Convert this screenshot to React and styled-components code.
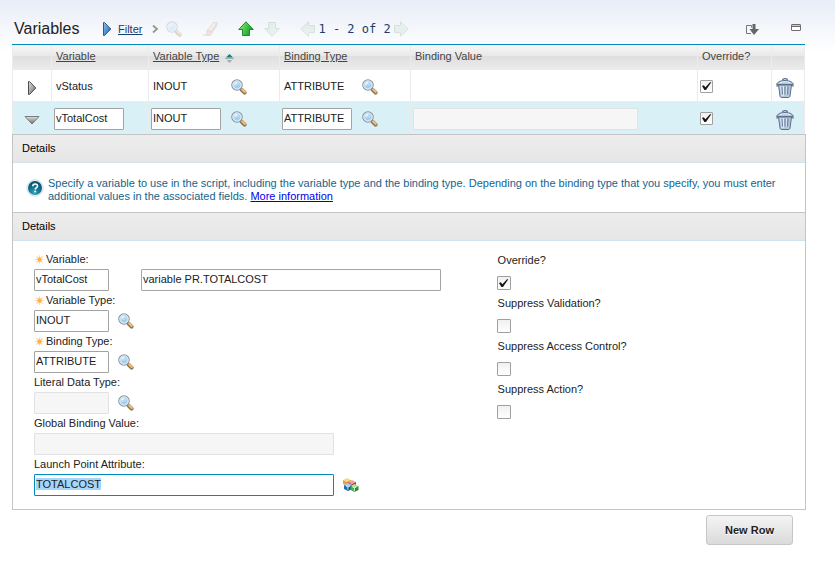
import React, { useEffect, useRef } from "react";
import styled, { createGlobalStyle } from "styled-components";

const ROWS = [
  { id: 1, name: "vStatus", type: "INOUT", binding: "ATTRIBUTE", open: false },
  { id: 2, name: "vTotalCost", type: "INOUT", binding: "ATTRIBUTE", open: true },
];

function SearchIcon() {
  return (
    <svg width="16" height="16" viewBox="0 0 16 16" aria-hidden="true">
      <path d="M9.4 9.4l2 2" stroke="#777d87" strokeWidth="2" />
      <path d="M10.8 10.8l2.800 2.800" stroke="#85745f" strokeWidth="4" strokeLinecap="round" />
      <path d="M11.200 10.400l2.600 2.600" stroke="#f5bd68" strokeWidth="2.200" strokeLinecap="round" />
      <circle cx="6" cy="6" r="5.200" fill="#b9dbf2" stroke="#8e949c" strokeWidth="1.200" />
      <circle cx="6" cy="6" r="4.200" fill="none" stroke="#e4edf4" strokeWidth="0.9" />
      <path d="M3.2 5.6c.3-1.7 1.4-2.6 3.2-2.6-.6 1.5-1.5 2.2-3.2 2.6z" fill="#fff" />
      <path d="M3.400 7.300c2.600.2 4.200-.5 5.600-2.200.7 3.200-3.600 5.600-5.600 2.200z" fill="#9accee" />
    </svg>
  );
}

function EraserIcon() {
  return (
    <svg width="16" height="16" viewBox="0 0 16 16" aria-hidden="true">
      <path d="M5 9.500L11.500 1.500h3.800L9.500 10.500z" fill="#f0dcc0" stroke="#a79c8a" strokeWidth="0.8" />
      <path d="M5 9.500l4.500 1-1 4H4.500z" fill="#f3a9a0" stroke="#b08f88" strokeWidth="0.8" />
      <path d="M9.500 10.500l5.800-9v3.500l-6.800 9.500z" fill="#b9ae9e" />
      <path d="M1 14h1.500M3 14h1" stroke="#777" strokeWidth="1.200" />
    </svg>
  );
}

const ARROW_TURN = { up: 0, right: 90, down: 180, left: 270 };

function ArrowIcon({ direction }) {
  const active = direction === "up";
  return (
    <svg width="16" height="16" viewBox="0 0 16 16" aria-hidden="true">
      <defs>
        <linearGradient id={`arrow-${direction}`} x1="0" y1="0" x2="1" y2="0.400">
          <stop offset="0" stopColor={active ? "#a8f08c" : "#d9ecd9"} />
          <stop offset="0.5" stopColor={active ? "#4fcf4a" : "#c9e2cb"} />
          <stop offset="1" stopColor={active ? "#1a9a30" : "#bcd8c0"} />
        </linearGradient>
      </defs>
      <path
        d="M8 0.800l7.300 7.700h-3.800v6h-7v-6H0.700z"
        fill={`url(#arrow-${direction})`}
        stroke={active ? "#1f8a35" : "#8fb596"}
        strokeLinejoin="round"
        transform={`rotate(${ARROW_TURN[direction]} 8 8)`}
      />
    </svg>
  );
}

function FilterIcon() {
  return (
    <svg width="10" height="16" viewBox="0 0 10 16" aria-hidden="true">
      <defs>
        <linearGradient id="filter-fill" x1="0" y1="0" x2="1" y2="1">
          <stop offset="0" stopColor="#8ec3ee" />
          <stop offset="1" stopColor="#1762ab" />
        </linearGradient>
      </defs>
      <path d="M1.500 1.500h1L8.800 8l-6.300 6.500h-1z" fill="url(#filter-fill)" stroke="#255b94" />
    </svg>
  );
}

function ChevronIcon() {
  return (
    <svg width="7" height="10" viewBox="0 0 7 10" aria-hidden="true">
      <path d="M1 1.500l4 3.500-4 3.500" fill="none" stroke="#98978c" strokeWidth="1.800" />
    </svg>
  );
}

function DownloadIcon() {
  return (
    <svg width="14" height="11" viewBox="0 0 14 11" aria-hidden="true">
      <path d="M5 1.500H1.500v8H6" fill="none" stroke="#777" />
      <path d="M4.500 1.500h2v2" fill="none" stroke="#777" />
      <path d="M7.500 0h3v5H14L9 11 4.500 5h3z" fill="#666" />
    </svg>
  );
}

function MinimizeIcon() {
  return (
    <svg width="10" height="7" viewBox="0 0 10 7" aria-hidden="true">
      <rect x="0.500" y="0.500" width="9" height="6" rx="0.500" fill="#fff" stroke="#6d6d6d" />
      <path d="M1 1.500h8" stroke="#c9c9c9" />
      <path d="M0 2.500h10" stroke="#6d6d6d" />
    </svg>
  );
}

function SortIcon() {
  return (
    <svg width="9" height="9" viewBox="0 0 9 9" aria-hidden="true">
      <path d="M4.500 0L8 3.500H1z" fill="#0c7f7f" />
      <path d="M0 4.500h9" stroke="#8cb4b4" />
      <path d="M1.500 6h6l-3 3z" fill="#adadad" />
    </svg>
  );
}

function ExpandIcon({ open }) {
  return (
    <svg width="16" height="16" viewBox="0 0 16 16" aria-hidden="true">
      <defs>
        <linearGradient id={open ? "expand-open" : "expand-shut"} x1="0" y1="0" x2={open ? 0 : 1} y2="1">
          <stop offset="0" stopColor="#e0e0e0" />
          <stop offset="1" stopColor="#6c6c6c" />
        </linearGradient>
      </defs>
      {open ? (
        <path d="M1 4.500h14L8 12z" fill="url(#expand-open)" stroke="#7c7c7c" />
      ) : (
        <path d="M4.500 1.500h1L11.800 8l-6.300 6.500h-1z" fill="url(#expand-shut)" stroke="#4c4c4c" />
      )}
    </svg>
  );
}

function TrashIcon() {
  return (
    <svg width="18" height="20" viewBox="0 0 18 20" aria-hidden="true">
      <path d="M2.500 7L4 18c.2 1 .7 1.500 1.700 1.500h6.600c1 0 1.500-.5 1.700-1.500l1.500-11z" fill="#b3c6da" stroke="#5a7090" />
      <path d="M4 8l1.300 10h3V8z" fill="#d5e2ee" />
      <path d="M6 8.500l.5 8M9 8.500v8M12 8.500l-.5 8" stroke="#6d829e" strokeWidth="1.200" />
      <path d="M7.300 8.500l.2 8M10.400 8.500l-.1 8" stroke="#eef4f9" strokeWidth="0.700" />
      <path d="M2.500 7L1 8.500V5.500M15.500 7L17 8.500V5.500" fill="none" stroke="#566c89" />
      <path d="M6.500 2.500c0-2.500 5-2.500 5 0" fill="none" stroke="#566c89" strokeWidth="1.200" />
      <path d="M1 6.500c0-2.300 3-4 8-4s8 1.700 8 4z" fill="#b4c6d8" stroke="#5a7090" />
      <path d="M4 4.800c2.500-1.400 7.500-1.400 10 0" fill="none" stroke="#e8f0f6" />
    </svg>
  );
}

function HelpIcon() {
  return (
    <svg width="18" height="18" viewBox="0 0 18 18" aria-hidden="true">
      <defs>
        <radialGradient id="help-fill" cx="0.450" cy="0.850" r="0.900">
          <stop offset="0" stopColor="#33a5b8" />
          <stop offset="0.500" stopColor="#0f6f8c" />
          <stop offset="1" stopColor="#0b4a66" />
        </radialGradient>
      </defs>
      <circle cx="9" cy="9" r="8.200" fill="#eef3f6" stroke="#d3dee5" />
      <circle cx="9" cy="9" r="7" fill="url(#help-fill)" />
      <path
        d="M6.800 7.200c0-3 4.700-2.900 4.700-.3 0 1.700-2.300 1.700-2.300 3.600"
        fill="none"
        stroke="#fff"
        strokeWidth="1.600"
      />
      <circle cx="9.200" cy="12.600" r="1" fill="#fff" />
    </svg>
  );
}

function StarIcon() {
  return (
    <svg width="9" height="9" viewBox="0 0 9 9" aria-hidden="true">
      <path
        d="M4.500 0.500v8M0.500 4.500h8M1.500 1.500l6 6M7.500 1.500l-6 6"
        stroke="#fdd193"
        strokeWidth="1.200"
      />
      <circle cx="4.500" cy="4.500" r="2" fill="#fcb04a" />
    </svg>
  );
}

function Cube({ x, y, top, left, right }) {
  return (
    <g transform={`translate(${x} ${y})`}>
      <path d="M0 2l4-2 4 2-4 2z" fill={top} />
      <path d="M0 2l4 2v4L0 6z" fill={left} />
      <path d="M8 2L4 4v4l4-2z" fill={right} />
    </g>
  );
}

function CubesIcon() {
  return (
    <svg width="16" height="16" viewBox="0 0 16 16" aria-hidden="true">
      <Cube x={0} y={1} top="#fbd58a" left="#e9a13a" right="#d08a30" />
      <Cube x={5} y={3} top="#f2a0a4" left="#d0525b" right="#b03642" />
      <Cube x={1} y={6} top="#9dd0f5" left="#1f6fb2" right="#174c8c" />
      <Cube x={7.500} y={7} top="#a6e8a0" left="#45b04a" right="#2b8c38" />
      <path d="M3 9l2 1 2-1M5 10v3M9.500 10l2 1 2-1M11.500 11v3" fill="none" stroke="#e6f6f0" strokeWidth="0.800" />
    </svg>
  );
}

function Checkbox({ size = 13, ...props }) {
  return (
    <CheckWrap>
      <CheckInput type="checkbox" $size={size} {...props} />
      <CheckMark width="11" height="11" viewBox="0 0 11 11" aria-hidden="true">
        <path d="M1 5l1.800-.8 1.600 2L9 1.200h1.300L5 9H3.400z" fill="#161616" />
      </CheckMark>
    </CheckWrap>
  );
}

function Lookup({ label, children }) {
  return (
    <IconButton type="button" aria-label={label}>
      {children || <SearchIcon />}
    </IconButton>
  );
}

function VariableRow({ row }) {
  const fields = [
    ["Variable", row.name, false],
    ["Variable Type", row.type, true],
    ["Binding Type", row.binding, true],
  ];

  return (
    <Row $active={row.open}>
      <IconCell>
        <IconButton type="button" aria-label="Toggle details" aria-expanded={row.open}>
          <ExpandIcon open={row.open} />
        </IconButton>
      </IconCell>
      {fields.map(([label, value, lookup]) => (
        <Cell key={label}>
          <FieldLine>
            {row.open ? (
              <TextInput $width={70} aria-label={label} defaultValue={value} />
            ) : (
              <StaticValue>{value}</StaticValue>
            )}
            {lookup && <Lookup label={`Select ${label}`} />}
          </FieldLine>
        </Cell>
      ))}
      <Cell>
        {row.open && (
          <FieldLine>
            <TextInput $width={225} aria-label="Binding Value" disabled />
          </FieldLine>
        )}
      </Cell>
      <Cell>
        <Checkbox aria-label={`Override ${row.name}`} defaultChecked />
      </Cell>
      <IconCell $start>
        <IconButton type="button" aria-label={`Delete ${row.name}`}>
          <TrashIcon />
        </IconButton>
      </IconCell>
    </Row>
  );
}

function App() {
  const launchPoint = useRef(null);

  useEffect(() => {
    launchPoint.current.focus();
    launchPoint.current.select();
  }, []);

  return (
    <>
      <GlobalStyle />
      <Page>
        <Toolbar>
          <Title>Variables</Title>
          <FilterGroup>
            <FilterIcon />
            <a href="#filter">Filter</a>
          </FilterGroup>
          <ChevronIcon />
          <Tools>
            <ToolButton type="button" aria-label="Search" disabled>
              <SearchIcon />
            </ToolButton>
            <ToolButton type="button" aria-label="Clear filter" disabled>
              <EraserIcon />
            </ToolButton>
            <Steps>
              <ToolButton type="button" aria-label="Previous row">
                <ArrowIcon direction="up" />
              </ToolButton>
              <ToolButton type="button" aria-label="Next row" disabled>
                <ArrowIcon direction="down" />
              </ToolButton>
            </Steps>
            <Pager>
              <ToolButton type="button" aria-label="Previous page" disabled>
                <ArrowIcon direction="left" />
              </ToolButton>
              <PageCount>1 - 2 of 2</PageCount>
              <ToolButton type="button" aria-label="Next page" disabled>
                <ArrowIcon direction="right" />
              </ToolButton>
            </Pager>
          </Tools>
          <WindowTools>
            <IconButton type="button" aria-label="Download">
              <DownloadIcon />
            </IconButton>
            <IconButton type="button" aria-label="Minimize">
              <MinimizeIcon />
            </IconButton>
          </WindowTools>
        </Toolbar>

        <Table>
          <colgroup>
            <col width="39" />
            <col width="97" />
            <col width="131" />
            <col width="131" />
            <col />
            <col width="74" />
            <col width="33" />
          </colgroup>
          <thead>
            <tr>
              <HeadCell />
              <HeadCell>
                <a href="#variable">Variable</a>
              </HeadCell>
              <HeadCell>
                <SortLine>
                  <a href="#type">Variable Type</a>
                  <SortIcon />
                </SortLine>
              </HeadCell>
              <HeadCell>
                <a href="#binding">Binding Type</a>
              </HeadCell>
              <HeadCell>Binding Value</HeadCell>
              <HeadCell>Override?</HeadCell>
              <HeadCell />
            </tr>
          </thead>
          <tbody>
            {ROWS.map((row) => (
              <VariableRow key={row.id} row={row} />
            ))}
          </tbody>
        </Table>

        <Panel>
          <PanelHead>Details</PanelHead>
          <Help>
            <HelpIcon />
            <p>
              Specify a variable to use in the script, including the variable type and the binding
              type. Depending on the binding type that you specify, you must enter additional values
              in the associated fields. <a href="#more">More information</a>
            </p>
          </Help>
        </Panel>

        <Panel $last>
          <PanelHead>Details</PanelHead>
          <Form>
            <div>
              <FieldLabel htmlFor="variable">
                <StarIcon />
                Variable:
              </FieldLabel>
              <FieldLine $wide>
                <TextInput id="variable" $width={75} defaultValue="vTotalCost" />
                <TextInput
                  $width={300}
                  aria-label="Variable description"
                  defaultValue="variable PR.TOTALCOST"
                />
              </FieldLine>
              <FieldLabel htmlFor="variable-type">
                <StarIcon />
                Variable Type:
              </FieldLabel>
              <FieldLine>
                <TextInput id="variable-type" $width={75} defaultValue="INOUT" />
                <Lookup label="Select Variable Type" />
              </FieldLine>
              <FieldLabel htmlFor="binding-type">
                <StarIcon />
                Binding Type:
              </FieldLabel>
              <FieldLine>
                <TextInput id="binding-type" $width={75} defaultValue="ATTRIBUTE" />
                <Lookup label="Select Binding Type" />
              </FieldLine>
              <FieldLabel htmlFor="literal-type">Literal Data Type:</FieldLabel>
              <FieldLine>
                <TextInput id="literal-type" $width={75} disabled />
                <Lookup label="Select Literal Data Type" />
              </FieldLine>
              <FieldLabel htmlFor="global-value">Global Binding Value:</FieldLabel>
              <FieldLine>
                <TextInput id="global-value" $width={300} disabled />
              </FieldLine>
              <FieldLabel htmlFor="launch-point">Launch Point Attribute:</FieldLabel>
              <FieldLine>
                <TextInput
                  id="launch-point"
                  ref={launchPoint}
                  $width={300}
                  defaultValue="TOTALCOST"
                />
                <Lookup label="Select Attribute">
                  <CubesIcon />
                </Lookup>
              </FieldLine>
            </div>
            <Options>
              <label htmlFor="override">Override?</label>
              <Checkbox id="override" size={14} defaultChecked />
              <label htmlFor="validation">Suppress Validation?</label>
              <Checkbox id="validation" size={14} />
              <label htmlFor="access">Suppress Access Control?</label>
              <Checkbox id="access" size={14} />
              <label htmlFor="action">Suppress Action?</label>
              <Checkbox id="action" size={14} />
            </Options>
          </Form>
        </Panel>

        <Footer>
          <NewRowButton type="button">New Row</NewRowButton>
        </Footer>
      </Page>
    </>
  );
}

export default App;

const GlobalStyle = createGlobalStyle`
  * {
    box-sizing: border-box;
  }

  body {
    margin: 0;
    background: linear-gradient(#e8edf7, #ffffff 52px) no-repeat #ffffff;
    font-family: "Liberation Sans", Arial, Helvetica, sans-serif;
    font-size: 11px;
    line-height: 13px;
    color: #222;
  }

  svg {
    display: block;
    flex-shrink: 0;
  }
`;

const Page = styled.main`
  padding: 0 29px 16px 12px;
`;

const Toolbar = styled.header`
  display: flex;
  align-items: center;
  height: 45px;
  margin-right: 1px;
  padding: 14px 4px 0 2px;
  border-bottom: 1px solid #008abf;
`;

const Title = styled.h1`
  width: 88px;
  margin: 0;
  font-size: 16px;
  line-height: 20px;
  font-weight: normal;
`;

const FilterGroup = styled.div`
  display: flex;
  align-items: center;
  gap: 6px;
  margin-right: 10px;

  a {
    color: #16406f;
  }
`;

const Tools = styled.div`
  display: flex;
  align-items: center;
  gap: 20px;
  margin-left: 7px;
`;

const Steps = styled.div`
  display: flex;
  gap: 10px;
`;

const Pager = styled.div`
  display: flex;
  align-items: center;
  gap: 2px;
`;

const PageCount = styled.span`
  font-family: "DejaVu Sans Mono", monospace;
  font-size: 12px;
  line-height: 16px;
  white-space: pre;
  color: #1a3f68;
`;

const WindowTools = styled.div`
  display: flex;
  align-items: flex-start;
  gap: 32px;
  margin-left: auto;
`;

const IconButton = styled.button`
  padding: 0;
  border: none;
  background: none;
  cursor: pointer;
`;

const ToolButton = styled(IconButton)`
  &:disabled {
    opacity: 0.3;
    cursor: default;
  }
`;

const Table = styled.table`
  width: calc(100% - 1px);
  table-layout: fixed;
  border-spacing: 0;
  background: #fff;
  border-right: 1px solid #ebebeb;
`;

const HeadCell = styled.th`
  height: 25px;
  padding: 0 4px 2px;
  border-left: 1px solid #ebebeb;
  background: linear-gradient(#f8f8f8, #e8e8e8 44%, #dfdfdf 46%, #ececec);
  font-weight: normal;
  text-align: left;
  color: #444;

  a {
    color: inherit;
  }
`;

const SortLine = styled.div`
  display: flex;
  align-items: flex-end;
  gap: 6px;
`;

const Row = styled.tr`
  background: ${(props) => (props.$active ? "#d9f1f6" : "#fff")};
`;

const Cell = styled.td`
  height: 32px;
  padding: 2px 2px 0;
  border-left: 1px solid #ebebeb;
  border-bottom: 1px solid #ebebeb;
  vertical-align: middle;
`;

const IconCell = styled(Cell)`
  padding: 4px 4px 0;

  ${IconButton} {
    display: block;
    margin: ${(props) => (props.$start ? "0" : "0 auto")};
  }
`;

const FieldLine = styled.div`
  display: flex;
  align-items: center;
  gap: ${(props) => (props.$wide ? "32px" : "9px")};

  ${Cell} & {
    gap: 10px;
  }
`;

const StaticValue = styled.span`
  width: 70px;
  padding: 0 2px;
`;

const TextInput = styled.input`
  width: ${(props) => props.$width}px;
  height: 22px;
  padding: 0 1px 2px;
  border: 1px solid #a3a3a3;
  border-radius: 1px;
  background: #fff;
  font: inherit;
  color: #222;

  &:focus {
    border-color: #008abf;
    outline: none;
  }

  &:disabled {
    border-color: #e2e2e2;
    background: #f6f6f6;
  }

  &::selection {
    background: rgba(165, 212, 252, 0.99);
    color: #222;
  }
`;

const CheckWrap = styled.span`
  display: grid;
  place-items: center;
  justify-content: start;
`;

const CheckInput = styled.input`
  grid-area: 1 / 1;
  appearance: none;
  width: ${(props) => props.$size}px;
  height: ${(props) => props.$size}px;
  margin: 0;
  border: 1px solid #a0a0a0;
  border-radius: 1px;
  background: linear-gradient(#f0f0f0, #fff);
`;

const CheckMark = styled.svg`
  grid-area: 1 / 1;
  pointer-events: none;
  visibility: hidden;

  ${CheckInput}:checked + & {
    visibility: visible;
  }
`;

const Panel = styled.section`
  border: 1px solid #c4c4c4;
  border-bottom-width: ${(props) => (props.$last ? "1px" : "0")};
  background: #fff;
`;

const PanelHead = styled.h2`
  height: 28px;
  margin: 0;
  padding: 0 9px;
  border-bottom: 1px solid #cfe2ee;
  background: linear-gradient(#ededed, #e6e6e6);
  font-size: 11px;
  line-height: 26px;
  font-weight: normal;
  color: #000;
`;

const Help = styled.div`
  display: flex;
  align-items: flex-start;
  gap: 4px;
  padding: 14px 12px 9px 13px;

  p {
    margin: 0;
    color: #13648f;
  }

  svg {
    margin-top: 2px;
  }

  a {
    color: #0000ee;
  }
`;

const Form = styled.div`
  display: grid;
  grid-template-columns: 3fr 2fr;
  padding: 9px 0 13px 21px;
`;

const FieldLabel = styled.label`
  display: flex;
  align-items: center;
  gap: 2px;
  height: 19px;

  svg {
    margin-left: 1px;
  }
`;

const Options = styled.div`
  display: grid;
  grid-auto-rows: 23px 20px;
  align-content: start;
  align-items: start;
  justify-items: start;
  padding-top: 3px;

  label {
    padding: 1px 1px 0;
  }
`;

const Footer = styled.footer`
  display: flex;
  justify-content: flex-end;
  padding: 5px 13px 0 0;
`;

const NewRowButton = styled.button`
  width: 87px;
  height: 30px;
  padding: 0;
  border: 1px solid #c6c6c6;
  border-radius: 3px;
  background: linear-gradient(#f4f4f4, #dadada);
  font: inherit;
  font-weight: bold;
  color: #222;
  text-shadow: 0 1px 0 #fff;
  cursor: pointer;
`;
